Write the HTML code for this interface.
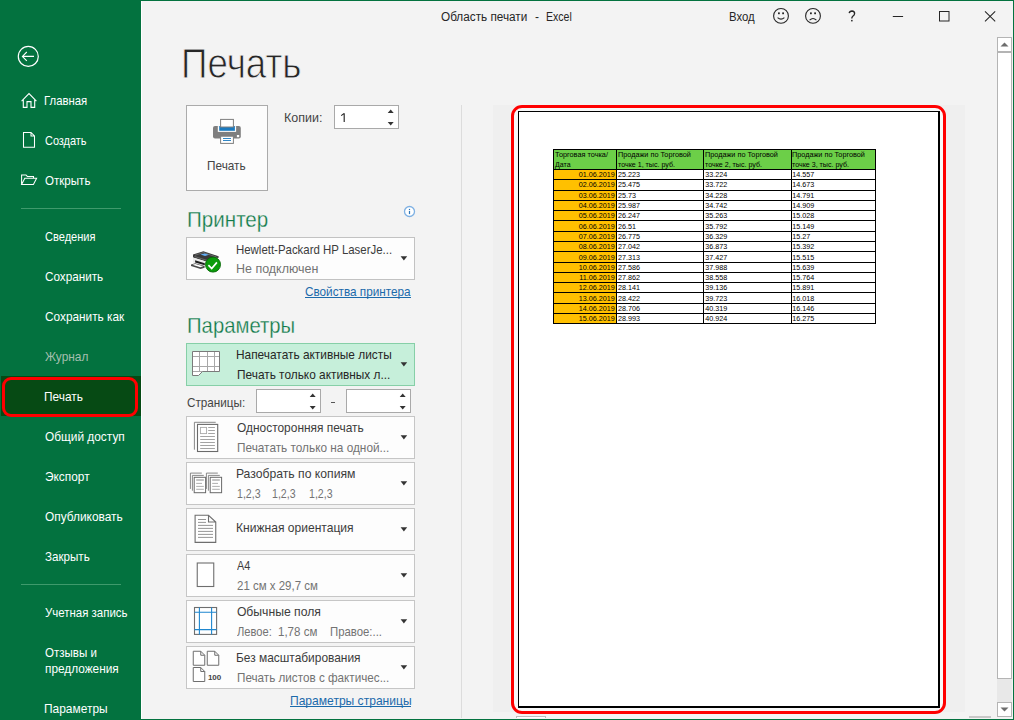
<!DOCTYPE html>
<html><head><meta charset="utf-8">
<style>
html,body{margin:0;padding:0;}
body{width:1014px;height:720px;position:relative;overflow:hidden;background:#f3f3f3;font-family:"Liberation Sans",sans-serif;}
.t{position:absolute;line-height:1;white-space:pre;transform-origin:0 0;}
.a{position:absolute;box-sizing:border-box;}
svg{position:absolute;overflow:visible;}
</style></head><body>
<div class="a" style="left:0px;top:0px;width:141px;height:720px;background:#03723f"></div><div class="a" style="left:141px;top:0px;width:1px;height:720px;background:#ffffff"></div><div class="a" style="left:0px;top:0px;width:1014px;height:1px;background:#03723f"></div><div class="a" style="left:1013px;top:0px;width:1px;height:720px;background:#03723f"></div><div class="a" style="left:0px;top:719px;width:1014px;height:1px;background:#03723f"></div><div class="a" style="left:1px;top:376px;width:140px;height:40px;background:#064a14"></div><div class="a" style="left:2px;top:377px;width:136px;height:40px;border:3.5px solid #ff0000;border-radius:9px"></div><div class="a" style="left:21px;top:208px;width:100px;height:1px;background:#3f9a6c"></div><div class="a" style="left:21px;top:584px;width:100px;height:1px;background:#3f9a6c"></div><svg style="left:0px;top:0px" width="60" height="80" viewBox="0 0 60 80"><circle cx="28.3" cy="56.4" r="10" fill="none" stroke="#fff" stroke-width="1.2"/><path d="M22.5 56.4H34M26.8 52L22.4 56.4L26.8 60.8" fill="none" stroke="#fff" stroke-width="1.1"/></svg><svg style="left:0px;top:0px" width="60" height="120" viewBox="0 0 60 120"><path d="M21.6 101.2L29 93.5L36.4 101.2M23.3 99.6V107.4H27V101.6H31V107.4H34.7V99.6" fill="none" stroke="#fff" stroke-width="1.1"/></svg><svg style="left:0px;top:0px" width="60" height="160" viewBox="0 0 60 160"><path d="M23.5 132.5H31L34.5 136V147.3H23.5Z M31 132.5V136H34.5" fill="none" stroke="#fff" stroke-width="1.05"/></svg><svg style="left:0px;top:0px" width="60" height="200" viewBox="0 0 60 200"><path d="M21.6 184.4V175H26L27.3 176.4H33.5V178.2 M21.6 184.4L24.8 178.2H36.6L33.4 184.4Z" fill="none" stroke="#fff" stroke-width="1.05"/></svg><svg style="left:760px;top:0px" width="250" height="32" viewBox="0 0 250 32"><circle cx="21" cy="15.9" r="7.4" fill="none" stroke="#262626" stroke-width="1.1"/><rect x="18" y="12.4" width="1.8" height="1.8" fill="#262626"/><rect x="22.2" y="12.4" width="1.8" height="1.8" fill="#262626"/><path d="M17.6 17.6Q21 20.6 24.4 17.6" fill="none" stroke="#262626" stroke-width="1.1"/><circle cx="53" cy="15.9" r="7.4" fill="none" stroke="#262626" stroke-width="1.1"/><rect x="50" y="12.4" width="1.8" height="1.8" fill="#262626"/><rect x="54.2" y="12.4" width="1.8" height="1.8" fill="#262626"/><path d="M49.6 20.2Q53 16.8 56.4 20.2" fill="none" stroke="#262626" stroke-width="1.1"/><path d="M89.2 13.2Q89.6 11 92 11Q94.6 11.2 94.6 13.4Q94.6 15 92.8 16.2Q91.8 17 91.8 18.6" fill="none" stroke="#262626" stroke-width="1.35"/><rect x="91.1" y="19.9" width="1.5" height="1.5" fill="#262626"/><path d="M132.8 16.5H143.1" stroke="#262626" stroke-width="1"/><rect x="179.5" y="11.5" width="9.5" height="9.5" fill="none" stroke="#262626" stroke-width="1"/><path d="M225 11.3L235.2 21.3M235.2 11.3L225 21.3" stroke="#262626" stroke-width="1.05"/></svg><div class="a" style="left:997px;top:37px;width:15px;height:15px;background:#fff;border:1px solid #b4b4b4"></div><svg style="left:997px;top:37px" width="15" height="15" viewBox="0 0 15 15"><path d="M3.5 9.5H11.5L7.5 5.5Z" fill="#6d6d6d"/></svg><div class="a" style="left:997px;top:52px;width:15px;height:627px;background:#fff;border:1px solid #b4b4b4"></div><div class="a" style="left:997px;top:679px;width:15px;height:23px;background:#e8e8e8"></div><div class="a" style="left:997px;top:702px;width:15px;height:15px;background:#fff;border:1px solid #b4b4b4"></div><svg style="left:997px;top:702px" width="15" height="15" viewBox="0 0 15 15"><path d="M3.5 5.5H11.5L7.5 9.5Z" fill="#6d6d6d"/></svg><div class="a" style="left:969px;top:716px;width:22px;height:2px;background:#c8c8c8"></div><div class="a" style="left:516px;top:716px;width:30px;height:2px;border:1px solid #bdbdbd;border-bottom:none;background:#fff"></div><div class="a" style="left:461px;top:105px;width:1px;height:613px;background:#dcdcdc"></div><div class="a" style="left:493px;top:105px;width:472px;height:607px;background:#efefef"></div><div class="a" style="left:186px;top:105px;width:82px;height:86px;background:#fcfcfc;border:1px solid #ababab"></div><svg style="left:200px;top:110px" width="50" height="40" viewBox="0 0 50 40"><path d="M15 16.1H38.8Q40.8 16.1 40.8 18.1V26.6Q40.8 28.6 38.8 28.6H15Q13 28.6 13 26.6V18.1Q13 16.1 15 16.1Z" fill="#7f7f7f"/><rect x="17.8" y="16.1" width="18.3" height="5.8" fill="#fcfcfc"/><rect x="19.2" y="16.1" width="15.7" height="4.7" fill="#1a7ac0"/><rect x="20.6" y="9.4" width="12.8" height="7.6" fill="#fff" stroke="#7f7f7f" stroke-width="1"/><rect x="20.6" y="26.2" width="12.8" height="7.2" fill="#fff" stroke="#7f7f7f" stroke-width="1"/><rect x="23" y="28.1" width="8" height="0.9" fill="#1a7ac0"/><rect x="23" y="30.1" width="8" height="0.9" fill="#1a7ac0"/><rect x="36.9" y="25" width="2.3" height="2.2" fill="#fff"/></svg><div class="a" style="left:334px;top:105px;width:65px;height:24px;background:#fff;border:1px solid #a9a9a9"></div><svg style="left:0px;top:0px" width="1014" height="720" viewBox="0 0 1014 720"><path d="M387.7 113H393.7L390.7 109.6Z M387.7 122H393.7L390.7 125.4Z" fill="#333"/></svg><svg style="left:0px;top:0px" width="1014" height="720" viewBox="0 0 1014 720"><path d="M344.2 113.2V122M341.2 115.6L344.2 113.4" fill="none" stroke="#262626" stroke-width="1.15"/></svg><div class="a" style="left:256px;top:389px;width:65px;height:24px;background:#fff;border:1px solid #a9a9a9"></div><svg style="left:0px;top:0px" width="1014" height="720" viewBox="0 0 1014 720"><path d="M309.7 397H315.7L312.7 393.6Z M309.7 406H315.7L312.7 409.4Z" fill="#333"/></svg><div class="a" style="left:346px;top:389px;width:65px;height:24px;background:#fff;border:1px solid #a9a9a9"></div><svg style="left:0px;top:0px" width="1014" height="720" viewBox="0 0 1014 720"><path d="M399.7 397H405.7L402.7 393.6Z M399.7 406H405.7L402.7 409.4Z" fill="#333"/></svg><div class="a" style="left:331px;top:402px;width:3.5px;height:1px;background:#555"></div><svg style="left:398px;top:200px" width="22" height="22" viewBox="0 0 22 22"><circle cx="11.5" cy="11.5" r="5" fill="#fff" stroke="#7fb1e3" stroke-width="1.3"/><rect x="10.9" y="8.9" width="1.2" height="1.2" fill="#2e75b6"/><rect x="10.9" y="11" width="1.2" height="3.1" fill="#2e75b6"/></svg><div class="a" style="left:186px;top:237px;width:229px;height:43px;background:#fdfdfd;border:1px solid #c2c2c2"></div><svg style="left:0px;top:0px" width="1014" height="720" viewBox="0 0 1014 720"><path d="M400.6 256.2H407.2L403.9 260.4Z" fill="#333"/></svg><div class="a" style="left:186px;top:343px;width:229px;height:43px;background:#c6efda;border:1px solid #86cfa7"></div><svg style="left:0px;top:0px" width="1014" height="720" viewBox="0 0 1014 720"><path d="M400.6 362.2H407.2L403.9 366.4Z" fill="#333"/></svg><div class="a" style="left:186px;top:416px;width:229px;height:43px;background:#fdfdfd;border:1px solid #c6c6c6"></div><svg style="left:0px;top:0px" width="1014" height="720" viewBox="0 0 1014 720"><path d="M400.6 435.2H407.2L403.9 439.4Z" fill="#333"/></svg><div class="a" style="left:186px;top:462px;width:229px;height:43px;background:#fdfdfd;border:1px solid #c6c6c6"></div><svg style="left:0px;top:0px" width="1014" height="720" viewBox="0 0 1014 720"><path d="M400.6 481.2H407.2L403.9 485.4Z" fill="#333"/></svg><div class="a" style="left:186px;top:508px;width:229px;height:43px;background:#fdfdfd;border:1px solid #c6c6c6"></div><svg style="left:0px;top:0px" width="1014" height="720" viewBox="0 0 1014 720"><path d="M400.6 527.2H407.2L403.9 531.4Z" fill="#333"/></svg><div class="a" style="left:186px;top:554px;width:229px;height:43px;background:#fdfdfd;border:1px solid #c6c6c6"></div><svg style="left:0px;top:0px" width="1014" height="720" viewBox="0 0 1014 720"><path d="M400.6 573.2H407.2L403.9 577.4Z" fill="#333"/></svg><div class="a" style="left:186px;top:600px;width:229px;height:43px;background:#fdfdfd;border:1px solid #c6c6c6"></div><svg style="left:0px;top:0px" width="1014" height="720" viewBox="0 0 1014 720"><path d="M400.6 619.2H407.2L403.9 623.4Z" fill="#333"/></svg><div class="a" style="left:186px;top:646px;width:229px;height:43px;background:#fdfdfd;border:1px solid #c6c6c6"></div><svg style="left:0px;top:0px" width="1014" height="720" viewBox="0 0 1014 720"><path d="M400.6 665.2H407.2L403.9 669.4Z" fill="#333"/></svg><svg style="left:186px;top:240px" width="40" height="40" viewBox="0 0 40 40"><path d="M7 14.5L17.4 11.2L32.6 16.3V17.8L21 21.8L7 17.4Z" fill="#3a3a3a"/><path d="M9 15.2L17.4 12.6L30 16.8M8.5 16.5L21 20.4L31.5 17" fill="none" stroke="#8a8a8a" stroke-width="0.6"/><path d="M14.5 14.6L18.5 13.4L23 14.8L19 16Z" fill="#63aef5"/><path d="M7 17.4V22.6L20 26.6V21.6Z" fill="#ececec"/><path d="M9.1 20.3L18.8 23.2V25.3L9.1 22.4Z" fill="#1e1e1e"/><path d="M5 24.6L9.2 23.2L18.6 26V27.8L14.6 29L5 26Z" fill="#4a4a4a"/><path d="M6.4 24.8L9.3 23.9L17.2 26.3L14.3 27.3Z" fill="#fff"/><circle cx="27" cy="24.6" r="7.5" fill="#0b9c0b" stroke="#066606" stroke-width="0.9"/><path d="M22.4 25.2L25.7 28.5L30.9 22.4" fill="none" stroke="#fff" stroke-width="1.7"/></svg><svg style="left:186px;top:344px" width="40" height="40" viewBox="0 0 40 40"><path d="M6.5 7.5H33.5V27.5H16.5L12.5 31.5H6.5Z" fill="#fff"/><path d="M13.5 7.5V27.5M21.5 7.5V27.5M28.5 7.5V27.5M6.5 12.5H33.5M6.5 22.5H33.5M6.5 27.5H16.5" fill="none" stroke="#a8a8a8" stroke-width="1"/><path d="M6.5 7.5H33.5V27.5H16.5L12.5 31.5H6.5Z" fill="none" stroke="#7a7a7a" stroke-width="1"/></svg><svg style="left:186px;top:416px" width="40" height="40" viewBox="0 0 40 40"><path d="M8.4 33.7V6.3H29.7" fill="none" stroke="#7a7a7a" stroke-width="0.9"/><rect x="11.5" y="8.4" width="20.2" height="27.1" fill="#fff" stroke="#6a6a6a" stroke-width="1.1"/><rect x="14.4" y="11.4" width="6.2" height="6.2" fill="none" stroke="#a8a8a8" stroke-width="0.9"/><path d="M22.2 11.5H28.9M22.2 14.5H28.9M22.2 17.5H28.9M14.2 20.5H28.9M14.2 23.5H28.9M14.2 26.5H28.9M14.2 29.5H28.9M14.2 32.5H28.9" stroke="#9a9a9a" stroke-width="0.9"/></svg><svg style="left:186px;top:462px" width="40" height="40" viewBox="0 0 40 40"><path d="M4.4 26.9V11.1H15.8 M6.4 28.7V13.4H17.8" fill="none" stroke="#7a7a7a" stroke-width="0.9"/><rect x="8.2" y="15.3" width="11.4" height="15.4" fill="#fff" stroke="#6a6a6a" stroke-width="1"/><path d="M10.2 18H17.8" stroke="#b0b0b0" stroke-width="1.5"/><path d="M10.2 21.4H16.0M10.2 24.4H17.8M10.2 27.3H17.8" stroke="#9a9a9a" stroke-width="0.8"/><path d="M20.4 26.9V11.1H31.799999999999997 M22.4 28.7V13.4H33.8" fill="none" stroke="#7a7a7a" stroke-width="0.9"/><rect x="24.2" y="15.3" width="11.4" height="15.4" fill="#fff" stroke="#6a6a6a" stroke-width="1"/><path d="M26.2 18H33.8" stroke="#b0b0b0" stroke-width="1.5"/><path d="M26.2 21.4H32.0M26.2 24.4H33.8M26.2 27.3H33.8" stroke="#9a9a9a" stroke-width="0.8"/></svg><svg style="left:186px;top:508px" width="40" height="40" viewBox="0 0 40 40"><path d="M9.1 7.25H22.5L29.75 14V34.4H9.1Z M22.5 7.25V14H29.75" fill="#fff" stroke="#6e6e6e" stroke-width="1.1"/><path d="M12 11.5H20M12 14.4H20M12 17.4H27M12 20.4H27M12 23.4H27M12 26.4H27M12 29.4H27" stroke="#8a8a8a" stroke-width="0.9"/></svg><svg style="left:186px;top:554px" width="40" height="40" viewBox="0 0 40 40"><rect x="11.25" y="9" width="16.5" height="23.5" fill="#fff" stroke="#6e6e6e" stroke-width="1.1"/></svg><svg style="left:186px;top:600px" width="40" height="40" viewBox="0 0 40 40"><rect x="8.5" y="7.5" width="22.1" height="26.9" fill="#fff" stroke="#6e6e6e" stroke-width="1.1"/><path d="M13.4 7.5V34.4M25.6 7.5V34.4M8.5 12.25H30.6M8.5 29.6H30.6" stroke="#1f87cf" stroke-width="1.1"/></svg><svg style="left:186px;top:646px" width="40" height="40" viewBox="0 0 40 40"><path d="M7.25 5.25H14.75L18.75 9.25V19.25H7.25Z M14.75 5.25V9.25H18.75" fill="#fff" stroke="#6e6e6e" stroke-width="1"/><path d="M21.25 5.25H28.75L32.75 9.25V19.25H21.25Z M28.75 5.25V9.25H32.75" fill="#fff" stroke="#6e6e6e" stroke-width="1"/><path d="M7.25 21.5H14.75L18.75 25.5V35.5H7.25Z M14.75 21.5V25.5H18.75" fill="#fff" stroke="#6e6e6e" stroke-width="1"/></svg><div class="a" style="left:513px;top:108px;width:431px;height:604px;background:#f8f8f8;border-radius:8px"></div><div class="a" style="left:511px;top:105px;width:435px;height:609px;border:3.3px solid #ff0000;border-radius:11px"></div><div class="a" style="left:518px;top:111px;width:422px;height:597px;background:#fff;border:solid #000;border-width:1px 2px 2px 1px"></div><div class="a" style="left:553px;top:149px;width:323px;height:20px;background:#6ccf48"></div><div class="a" style="left:553px;top:169px;width:63px;height:154px;background:#ffc000"></div><svg style="left:0px;top:0px" width="1014" height="720" viewBox="0 0 1014 720"><rect x="553" y="149" width="323" height="1" fill="#000"/><rect x="553" y="169" width="323" height="1" fill="#000"/><rect x="553" y="179" width="323" height="1" fill="#000"/><rect x="553" y="190" width="323" height="1" fill="#000"/><rect x="553" y="200" width="323" height="1" fill="#000"/><rect x="553" y="210" width="323" height="1" fill="#000"/><rect x="553" y="220" width="323" height="1" fill="#000"/><rect x="553" y="231" width="323" height="1" fill="#000"/><rect x="553" y="241" width="323" height="1" fill="#000"/><rect x="553" y="251" width="323" height="1" fill="#000"/><rect x="553" y="262" width="323" height="1" fill="#000"/><rect x="553" y="272" width="323" height="1" fill="#000"/><rect x="553" y="282" width="323" height="1" fill="#000"/><rect x="553" y="292" width="323" height="1" fill="#000"/><rect x="553" y="303" width="323" height="1" fill="#000"/><rect x="553" y="313" width="323" height="1" fill="#000"/><rect x="553" y="323" width="323" height="1" fill="#000"/><rect x="553" y="149" width="1" height="175" fill="#000"/><rect x="616" y="149" width="1" height="175" fill="#000"/><rect x="703" y="149" width="1" height="175" fill="#000"/><rect x="791" y="149" width="1" height="175" fill="#000"/><rect x="875" y="149" width="1" height="175" fill="#000"/></svg><div class="a" style="left:305px;top:297px;width:106px;height:1px;background:#1b6aab"></div><div class="a" style="left:290px;top:706px;width:121px;height:1px;background:#1b6aab"></div>
<div class="t" style="left:441.40px;top:11.20px;font-size:12px;color:#262626;transform:scaleX(0.9799);">Область печати</div>
<div class="t" style="left:535.00px;top:11.20px;font-size:12px;color:#262626;">-</div>
<div class="t" style="left:546.00px;top:11.20px;font-size:12px;color:#262626;transform:scaleX(0.8787);">Excel</div>
<div class="t" style="left:729.40px;top:11.40px;font-size:12px;color:#262626;transform:scaleX(0.9468);">Вход</div>
<div class="t" style="left:44.31px;top:94.72px;font-size:12.8px;color:#ffffff;transform:scaleX(0.8875);">Главная</div>
<div class="t" style="left:45.20px;top:134.72px;font-size:12.8px;color:#ffffff;transform:scaleX(0.8537);">Создать</div>
<div class="t" style="left:45.20px;top:174.72px;font-size:12.8px;color:#ffffff;transform:scaleX(0.9034);">Открыть</div>
<div class="t" style="left:45.20px;top:230.72px;font-size:12.8px;color:#ffffff;transform:scaleX(0.8645);">Сведения</div>
<div class="t" style="left:45.20px;top:270.72px;font-size:12.8px;color:#ffffff;transform:scaleX(0.9152);">Сохранить</div>
<div class="t" style="left:45.20px;top:310.72px;font-size:12.8px;color:#ffffff;transform:scaleX(0.9240);">Сохранить как</div>
<div class="t" style="left:45.20px;top:350.72px;font-size:12.8px;color:#a3bfae;transform:scaleX(0.9302);">Журнал</div>
<div class="t" style="left:44.27px;top:390.72px;font-size:12.8px;color:#ffffff;transform:scaleX(0.9260);">Печать</div>
<div class="t" style="left:45.20px;top:430.72px;font-size:12.8px;color:#ffffff;transform:scaleX(0.9274);">Общий доступ</div>
<div class="t" style="left:45.20px;top:470.72px;font-size:12.8px;color:#ffffff;transform:scaleX(0.9270);">Экспорт</div>
<div class="t" style="left:45.20px;top:510.72px;font-size:12.8px;color:#ffffff;transform:scaleX(0.9285);">Опубликовать</div>
<div class="t" style="left:45.20px;top:550.72px;font-size:12.8px;color:#ffffff;transform:scaleX(0.9069);">Закрыть</div>
<div class="t" style="left:45.20px;top:606.72px;font-size:12.8px;color:#ffffff;transform:scaleX(0.8953);">Учетная запись</div>
<div class="t" style="left:45.20px;top:647.22px;font-size:12.8px;color:#ffffff;transform:scaleX(0.9002);">Отзывы и</div>
<div class="t" style="left:45.20px;top:663.02px;font-size:12.8px;color:#ffffff;transform:scaleX(0.9245);">предложения</div>
<div class="t" style="left:44.27px;top:702.72px;font-size:12.8px;color:#ffffff;transform:scaleX(0.9326);">Параметры</div>
<div class="t" style="left:181.08px;top:43.43px;font-size:42.2px;color:#262626;transform:scaleX(0.8717);-webkit-text-stroke:0.9px #f3f3f3;">Печать</div>
<div class="t" style="left:206.88px;top:159.62px;font-size:12.8px;color:#444444;transform:scaleX(0.9211);">Печать</div>
<div class="t" style="left:284.42px;top:111.72px;font-size:12.8px;color:#444444;transform:scaleX(0.9763);">Копии:</div>
<div class="t" style="left:186.78px;top:208.56px;font-size:22.4px;color:#0f7a48;transform:scaleX(0.9197);-webkit-text-stroke:0.3px #f3f3f3;">Принтер</div>
<div class="t" style="left:235.96px;top:243.53px;font-size:12.2px;color:#3c3c3c;transform:scaleX(0.9380);">Hewlett-Packard HP LaserJe...</div>
<div class="t" style="left:235.88px;top:263.13px;font-size:12.2px;color:#737373;transform:scaleX(1.0220);">Не подключен</div>
<div class="t" style="left:305.00px;top:286.13px;font-size:12.2px;color:#1b6aab;transform:scaleX(0.9634);">Свойства принтера</div>
<div class="t" style="left:186.59px;top:314.76px;font-size:22.4px;color:#0f7a48;transform:scaleX(0.9065);-webkit-text-stroke:0.3px #f3f3f3;">Параметры</div>
<div class="t" style="left:235.93px;top:349.23px;font-size:12.2px;color:#262626;transform:scaleX(0.9744);">Напечатать активные листы</div>
<div class="t" style="left:236.90px;top:369.23px;font-size:12.2px;color:#262626;transform:scaleX(0.9725);">Печать только активных л...</div>
<div class="t" style="left:186.60px;top:396.53px;font-size:12.2px;color:#444444;transform:scaleX(0.9598);">Страницы:</div>
<div class="t" style="left:236.90px;top:422.03px;font-size:12.2px;color:#3c3c3c;transform:scaleX(0.9786);">Односторонняя печать</div>
<div class="t" style="left:236.90px;top:442.13px;font-size:12.2px;color:#737373;transform:scaleX(0.9687);">Печатать только на одной...</div>
<div class="t" style="left:235.90px;top:467.73px;font-size:12.2px;color:#3c3c3c;">Разобрать по копиям</div>
<div class="t" style="left:236.90px;top:487.83px;font-size:12.2px;color:#737373;transform:scaleX(0.8672);">1,2,3</div>
<div class="t" style="left:272.30px;top:487.83px;font-size:12.2px;color:#737373;transform:scaleX(0.8672);">1,2,3</div>
<div class="t" style="left:308.50px;top:487.83px;font-size:12.2px;color:#737373;transform:scaleX(0.8672);">1,2,3</div>
<div class="t" style="left:235.91px;top:522.23px;font-size:12.2px;color:#3c3c3c;transform:scaleX(0.9900);">Книжная ориентация</div>
<div class="t" style="left:236.90px;top:560.03px;font-size:12.2px;color:#3c3c3c;transform:scaleX(0.8923);">А4</div>
<div class="t" style="left:236.90px;top:580.23px;font-size:12.2px;color:#737373;transform:scaleX(0.9417);">21 см x 29,7 см</div>
<div class="t" style="left:236.90px;top:606.03px;font-size:12.2px;color:#3c3c3c;">Обычные поля</div>
<div class="t" style="left:236.90px;top:625.93px;font-size:12.2px;color:#737373;transform:scaleX(0.9158);">Левое:</div>
<div class="t" style="left:278.00px;top:625.93px;font-size:12.2px;color:#737373;transform:scaleX(0.9466);">1,78 см</div>
<div class="t" style="left:329.60px;top:625.93px;font-size:12.2px;color:#737373;transform:scaleX(0.9319);">Правое:...</div>
<div class="t" style="left:235.92px;top:651.93px;font-size:12.2px;color:#3c3c3c;transform:scaleX(0.9783);">Без масштабирования</div>
<div class="t" style="left:236.90px;top:671.63px;font-size:12.2px;color:#737373;transform:scaleX(0.9587);">Печать листов с фактичес...</div>
<div class="t" style="left:290.00px;top:695.23px;font-size:12.2px;color:#1b6aab;transform:scaleX(0.9893);">Параметры страницы</div>
<div class="t" style="left:207.90px;top:674.40px;font-size:8px;color:#444444;font-weight:700;font-family:"Liberation Serif",serif;transform:scaleX(0.9833);">100</div>
<div class="t" style="left:578.82px;top:171.18px;font-size:7.2px;color:#000000;">01.06.2019</div>
<div class="t" style="left:618.00px;top:171.18px;font-size:7.2px;color:#000000;">25.223</div>
<div class="t" style="left:705.30px;top:171.18px;font-size:7.2px;color:#000000;">33.224</div>
<div class="t" style="left:792.30px;top:171.18px;font-size:7.2px;color:#000000;">14.557</div>
<div class="t" style="left:578.82px;top:181.47px;font-size:7.2px;color:#000000;">02.06.2019</div>
<div class="t" style="left:618.00px;top:181.47px;font-size:7.2px;color:#000000;">25.475</div>
<div class="t" style="left:705.30px;top:181.47px;font-size:7.2px;color:#000000;">33.722</div>
<div class="t" style="left:792.30px;top:181.47px;font-size:7.2px;color:#000000;">14.673</div>
<div class="t" style="left:578.82px;top:191.76px;font-size:7.2px;color:#000000;">03.06.2019</div>
<div class="t" style="left:618.00px;top:191.76px;font-size:7.2px;color:#000000;">25.73</div>
<div class="t" style="left:705.30px;top:191.76px;font-size:7.2px;color:#000000;">34.228</div>
<div class="t" style="left:792.30px;top:191.76px;font-size:7.2px;color:#000000;">14.791</div>
<div class="t" style="left:578.82px;top:202.05px;font-size:7.2px;color:#000000;">04.06.2019</div>
<div class="t" style="left:618.00px;top:202.05px;font-size:7.2px;color:#000000;">25.987</div>
<div class="t" style="left:705.30px;top:202.05px;font-size:7.2px;color:#000000;">34.742</div>
<div class="t" style="left:792.30px;top:202.05px;font-size:7.2px;color:#000000;">14.909</div>
<div class="t" style="left:578.82px;top:212.34px;font-size:7.2px;color:#000000;">05.06.2019</div>
<div class="t" style="left:618.00px;top:212.34px;font-size:7.2px;color:#000000;">26.247</div>
<div class="t" style="left:705.30px;top:212.34px;font-size:7.2px;color:#000000;">35.263</div>
<div class="t" style="left:792.30px;top:212.34px;font-size:7.2px;color:#000000;">15.028</div>
<div class="t" style="left:578.82px;top:222.63px;font-size:7.2px;color:#000000;">06.06.2019</div>
<div class="t" style="left:618.00px;top:222.63px;font-size:7.2px;color:#000000;">26.51</div>
<div class="t" style="left:705.30px;top:222.63px;font-size:7.2px;color:#000000;">35.792</div>
<div class="t" style="left:792.30px;top:222.63px;font-size:7.2px;color:#000000;">15.149</div>
<div class="t" style="left:578.82px;top:232.92px;font-size:7.2px;color:#000000;">07.06.2019</div>
<div class="t" style="left:618.00px;top:232.92px;font-size:7.2px;color:#000000;">26.775</div>
<div class="t" style="left:705.30px;top:232.92px;font-size:7.2px;color:#000000;">36.329</div>
<div class="t" style="left:792.30px;top:232.92px;font-size:7.2px;color:#000000;">15.27</div>
<div class="t" style="left:578.82px;top:243.21px;font-size:7.2px;color:#000000;">08.06.2019</div>
<div class="t" style="left:618.00px;top:243.21px;font-size:7.2px;color:#000000;">27.042</div>
<div class="t" style="left:705.30px;top:243.21px;font-size:7.2px;color:#000000;">36.873</div>
<div class="t" style="left:792.30px;top:243.21px;font-size:7.2px;color:#000000;">15.392</div>
<div class="t" style="left:578.82px;top:253.50px;font-size:7.2px;color:#000000;">09.06.2019</div>
<div class="t" style="left:618.00px;top:253.50px;font-size:7.2px;color:#000000;">27.313</div>
<div class="t" style="left:705.30px;top:253.50px;font-size:7.2px;color:#000000;">37.427</div>
<div class="t" style="left:792.30px;top:253.50px;font-size:7.2px;color:#000000;">15.515</div>
<div class="t" style="left:578.82px;top:263.79px;font-size:7.2px;color:#000000;">10.06.2019</div>
<div class="t" style="left:618.00px;top:263.79px;font-size:7.2px;color:#000000;">27.586</div>
<div class="t" style="left:705.30px;top:263.79px;font-size:7.2px;color:#000000;">37.988</div>
<div class="t" style="left:792.30px;top:263.79px;font-size:7.2px;color:#000000;">15.639</div>
<div class="t" style="left:579.36px;top:274.08px;font-size:7.2px;color:#000000;">11.06.2019</div>
<div class="t" style="left:618.00px;top:274.08px;font-size:7.2px;color:#000000;">27.862</div>
<div class="t" style="left:705.30px;top:274.08px;font-size:7.2px;color:#000000;">38.558</div>
<div class="t" style="left:792.30px;top:274.08px;font-size:7.2px;color:#000000;">15.764</div>
<div class="t" style="left:578.82px;top:284.37px;font-size:7.2px;color:#000000;">12.06.2019</div>
<div class="t" style="left:618.00px;top:284.37px;font-size:7.2px;color:#000000;">28.141</div>
<div class="t" style="left:705.30px;top:284.37px;font-size:7.2px;color:#000000;">39.136</div>
<div class="t" style="left:792.30px;top:284.37px;font-size:7.2px;color:#000000;">15.891</div>
<div class="t" style="left:578.82px;top:294.66px;font-size:7.2px;color:#000000;">13.06.2019</div>
<div class="t" style="left:618.00px;top:294.66px;font-size:7.2px;color:#000000;">28.422</div>
<div class="t" style="left:705.30px;top:294.66px;font-size:7.2px;color:#000000;">39.723</div>
<div class="t" style="left:792.30px;top:294.66px;font-size:7.2px;color:#000000;">16.018</div>
<div class="t" style="left:578.82px;top:304.95px;font-size:7.2px;color:#000000;">14.06.2019</div>
<div class="t" style="left:618.00px;top:304.95px;font-size:7.2px;color:#000000;">28.706</div>
<div class="t" style="left:705.30px;top:304.95px;font-size:7.2px;color:#000000;">40.319</div>
<div class="t" style="left:792.30px;top:304.95px;font-size:7.2px;color:#000000;">16.146</div>
<div class="t" style="left:578.82px;top:315.24px;font-size:7.2px;color:#000000;">15.06.2019</div>
<div class="t" style="left:618.00px;top:315.24px;font-size:7.2px;color:#000000;">28.993</div>
<div class="t" style="left:705.30px;top:315.24px;font-size:7.2px;color:#000000;">40.924</div>
<div class="t" style="left:792.30px;top:315.24px;font-size:7.2px;color:#000000;">16.275</div>
<div class="t" style="left:555.10px;top:151.35px;font-size:7px;color:#000000;transform:scaleX(1.0454);">Торговая точка/</div>
<div class="t" style="left:555.10px;top:161.35px;font-size:7px;color:#000000;">Дата</div>
<div class="t" style="left:618.00px;top:151.35px;font-size:7px;color:#000000;transform:scaleX(1.0407);">Продажи по Торговой</div>
<div class="t" style="left:618.00px;top:161.35px;font-size:7px;color:#000000;transform:scaleX(1.0123);">точке 1, тыс. руб.</div>
<div class="t" style="left:705.30px;top:151.35px;font-size:7px;color:#000000;transform:scaleX(1.0407);">Продажи по Торговой</div>
<div class="t" style="left:705.30px;top:161.35px;font-size:7px;color:#000000;transform:scaleX(1.0123);">точке 2, тыс. руб.</div>
<div class="t" style="left:792.30px;top:151.35px;font-size:7px;color:#000000;transform:scaleX(1.0407);">Продажи по Торговой</div>
<div class="t" style="left:792.30px;top:161.35px;font-size:7px;color:#000000;transform:scaleX(1.0123);">точке 3, тыс. руб.</div>
</body></html>
